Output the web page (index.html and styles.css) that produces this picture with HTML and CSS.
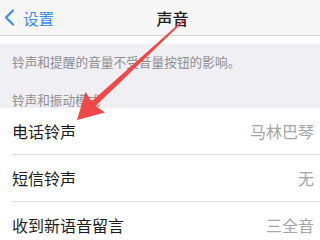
FILE: index.html
```
<!DOCTYPE html>
<html lang="zh-CN">
<head>
<meta charset="UTF-8" />
<meta name="viewport" content="width=device-width, initial-scale=1" />
<title>声音</title>
<link rel="stylesheet" href="styles.css">
</head>
<body>

<div class="screen">
  <div class="navbar">
    <div class="back">
      <svg class="chevron" width="11" height="17" viewBox="0 0 11 17">
        <path d="M9 1.5 L2 8.5 L9 15.5" fill="none" stroke="#3a8cf2" stroke-width="2.2" stroke-linecap="round" stroke-linejoin="round"/>
      </svg>
      <span>设置</span>
    </div>
    <div class="title">声音</div>
  </div>

  <div class="cell-tail"></div>

  <div class="group-footer">铃声和提醒的音量不受音量按钮的影响。</div>
  <div class="group-header">铃声和振动模式</div>

  <div class="list">
    <div class="row">
      <span class="label">电话铃声</span>
      <span class="value">马林巴琴</span>
    </div>
    <div class="row">
      <span class="label">短信铃声</span>
      <span class="value">无</span>
    </div>
    <div class="row">
      <span class="label">收到新语音留言</span>
      <span class="value">三全音</span>
    </div>
  </div>

  <svg class="arrow" width="320" height="240" viewBox="0 0 320 240">
    <polygon points="77,120 85.5,92 91.5,101.5 183.5,19.5 184.5,20.5 95.5,106 105,112.5" fill="#f04848"/>
  </svg>
</div>

</body>
</html>
```

FILE: styles.css
```
body {
  margin: 0;
  background: #efeff4;
  font-family: "Noto Sans CJK SC", "Noto Sans", sans-serif;
}
.screen {
  position: relative;
  width: 320px;
  height: 240px;
  overflow: hidden;
  background: #efeff4;
}
.navbar {
  position: relative;
  height: 35px;
  background: #f7f7f8;
  border-bottom: 1px solid #d9d9dc;
  display: flex;
  align-items: center;
  justify-content: center;
}
.back {
  position: absolute;
  left: 4px;
  top: 0;
  height: 35px;
  display: flex;
  align-items: center;
  gap: 8px;
  color: #3a8cf2;
  font-size: 15.5px;
}
.title {
  font-size: 16px;
  font-weight: 500;
  color: #222;
  margin-left: 25px;
}
.cell-tail {
  height: 8px;
  background: #fff;
}
.group-footer {
  padding: 9px 12px 0;
  height: 29px;
  font-size: 12.7px;
  line-height: 18px;
  color: #8e8e93;
}
.group-header {
  padding: 9px 12px 0;
  height: 17px;
  font-size: 12.6px;
  line-height: 18px;
  color: #8e8e93;
}
.list {
  background: #fff;
  padding-left: 12px;
}
.row {
  height: 46px;
  display: flex;
  align-items: center;
  justify-content: space-between;
  padding-right: 6px;
  border-bottom: 1px solid #dcdcdf;
  font-size: 16px;
}
.row:last-child {
  border-bottom: none;
}
.label {
  color: #1c1c1e;
}
.value {
  color: #a5a5aa;
}
.arrow {
  position: absolute;
  left: 0;
  top: 0;
}
```
